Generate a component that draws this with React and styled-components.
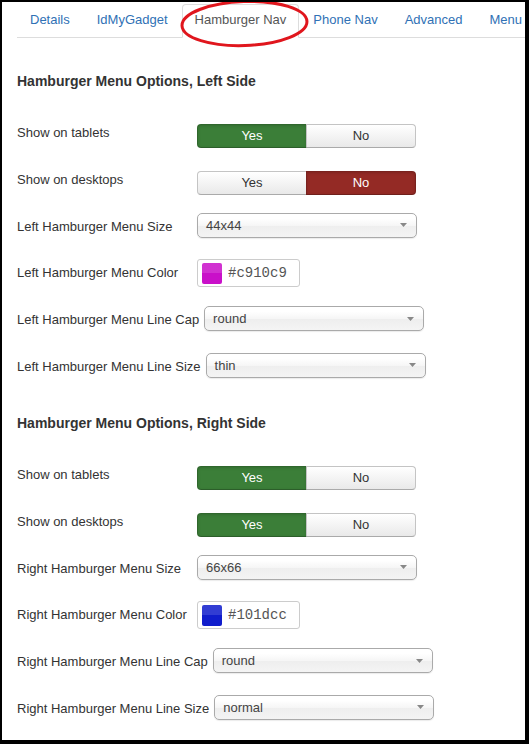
import React from "react";
import styled, { createGlobalStyle } from "styled-components";

const Global = createGlobalStyle`
  html, body { margin: 0; padding: 0; background: #fff; }
  body {
    font-family: "Liberation Sans", Arial, sans-serif;
    font-size: 13px;
    color: #333;
  }
`;

const Frame = styled.div`
  box-sizing: border-box;
  width: 529px;
  height: 744px;
  border-style: solid;
  border-color: #000;
  border-width: 2px 4px 4px 2px;
  background: #fff;
  overflow: hidden;
`;

const TabBar = styled.ul`
  display: flex;
  list-style: none;
  margin: 0 0 0 15px;
  padding: 2px 0 0;
  border-bottom: 1px solid #ddd;
  white-space: nowrap;
`;

const Tab = styled.li`
  position: relative;
  flex: none;
  margin: 0 1px -1px 0;
  padding: 6px 12px 8px;
  line-height: 18px;
  font-size: 13px;
  border: 1px solid ${(p) => (p.$active ? "#ddd" : "transparent")};
  border-bottom-color: ${(p) => (p.$active ? "#fff" : "transparent")};
  border-radius: 4px 4px 0 0;
  background: ${(p) => (p.$active ? "#fff" : "transparent")};
  color: ${(p) => (p.$active ? "#555" : "#3071b5")};
`;

const Circle = styled.svg`
  position: absolute;
  z-index: 2;
  left: -4px;
  top: -5px;
  transform: rotate(-2deg);
  pointer-events: none;
  overflow: visible;
`;

const Content = styled.div`
  padding: 33px 15px 0;
`;

const Section = styled.section`
  display: flex;
  flex-direction: column;
  & + & { margin-top: 13.2px; }
`;

const SectionTitle = styled.h3`
  margin: 0 0 28px;
  font-size: 14px;
  font-weight: bold;
  line-height: 20px;
  color: #333;
`;

const Row = styled.div`
  display: flex;
  align-items: flex-start;
  height: 28px;
  margin-bottom: 18.8px;
`;

const Label = styled.label`
  box-sizing: border-box;
  flex: none;
  min-width: 180px;
  padding: 5px 5px 0 0;
  line-height: 18px;
  white-space: nowrap;
  color: #333;
`;

const ToggleGroup = styled.div`
  display: flex;
  margin-top: 5px;
`;

const toggleBg = {
  success: "#3b7e38",
  danger: "#942a25",
};

const ToggleButton = styled.div`
  box-sizing: border-box;
  width: 110px;
  height: 24px;
  line-height: 22px;
  text-align: center;
  font-size: 13px;
  border: 1px solid ${(p) => (p.$variant ? "rgba(0,0,0,0.18)" : "#c4c4c4")};
  border-bottom-color: ${(p) => (p.$variant ? "rgba(0,0,0,0.25)" : "#aaa")};
  color: ${(p) => (p.$variant ? "#fff" : "#333")};
  background: ${(p) =>
    p.$variant ? toggleBg[p.$variant] : "linear-gradient(#ffffff, #e9e9e9)"};
  box-shadow: ${(p) =>
    p.$variant ? "inset 0 1px 3px rgba(0,0,0,0.15)" : "inset 0 1px 0 rgba(255,255,255,0.3)"};
  &:first-child { border-radius: 4px 0 0 4px; }
  &:last-child { border-radius: 0 4px 4px 0; margin-left: -1px; }
`;

const SelectBox = styled.div`
  box-sizing: border-box;
  display: flex;
  align-items: center;
  width: 220px;
  height: 25px;
  padding: 0 9px 0 8px;
  border: 1px solid #aaa;
  border-radius: 5px;
  background: linear-gradient(#fff 20%, #f6f6f6 50%, #eee 52%, #f4f4f4 100%);
  box-shadow: 0 1px 1px rgba(0, 0, 0, 0.08);
  color: #444;
  font-size: 13px;
  line-height: 23px;
`;

const SelectValue = styled.span`
  flex: 1;
`;

const Caret = styled.svg`
  flex: none;
`;

const ColorField = styled.div`
  box-sizing: border-box;
  display: flex;
  align-items: center;
  width: 103px;
  height: 28px;
  padding: 0 0 0 4px;
  border: 1px solid #ccc;
  border-radius: 3px;
  background: #fff;
`;

const Swatch = styled.span`
  flex: none;
  width: 20px;
  height: 21px;
  border-radius: 2px;
  background: linear-gradient(rgba(255, 255, 255, 0.14) 50%, rgba(0, 0, 0, 0) 50%),
    ${(p) => p.$color};
`;

const ColorText = styled.span`
  margin-left: 6px;
  font-family: "Liberation Mono", "Courier New", monospace;
  font-size: 14px;
  color: #555;
`;

const Toggle = ({ value }) => (
  <ToggleGroup>
    <ToggleButton $variant={value ? "success" : undefined}>Yes</ToggleButton>
    <ToggleButton $variant={value ? undefined : "danger"}>No</ToggleButton>
  </ToggleGroup>
);

const Select = ({ value }) => (
  <SelectBox>
    <SelectValue>{value}</SelectValue>
    <Caret width="7" height="4" viewBox="0 0 7 4">
      <polygon points="0,0 7,0 3.5,4" fill="#888" />
    </Caret>
  </SelectBox>
);

const Color = ({ value }) => (
  <ColorField>
    <Swatch $color={value} />
    <ColorText>{value}</ColorText>
  </ColorField>
);

const sections = [
  {
    title: "Hamburger Menu Options, Left Side",
    side: "Left",
    tablets: true,
    desktops: false,
    size: "44x44",
    color: "#c910c9",
    cap: "round",
    line: "thin",
  },
  {
    title: "Hamburger Menu Options, Right Side",
    side: "Right",
    tablets: true,
    desktops: true,
    size: "66x66",
    color: "#101dcc",
    cap: "round",
    line: "normal",
  },
];

const tabs = ["Details", "IdMyGadget", "Hamburger Nav", "Phone Nav", "Advanced", "Menu"];

export default function App() {
  return (
    <>
      <Global />
      <Frame>
        <TabBar>
          {tabs.map((t) => (
            <Tab key={t} $active={t === "Hamburger Nav"}>
              {t}
              {t === "Hamburger Nav" && (
                <Circle width="132" height="48" viewBox="0 0 132 48">
                  <ellipse
                    cx="65.5"
                    cy="23.5"
                    rx="62.5"
                    ry="22"
                    fill="none"
                    stroke="#e0161d"
                    strokeWidth="3"
                  />
                </Circle>
              )}
            </Tab>
          ))}
        </TabBar>
        <Content>
          {sections.map((s) => (
            <Section key={s.side}>
              <SectionTitle>{s.title}</SectionTitle>
              <Row>
                <Label>Show on tablets</Label>
                <Toggle value={s.tablets} />
              </Row>
              <Row>
                <Label>Show on desktops</Label>
                <Toggle value={s.desktops} />
              </Row>
              <Row>
                <Label>{s.side} Hamburger Menu Size</Label>
                <Select value={s.size} />
              </Row>
              <Row>
                <Label>{s.side} Hamburger Menu Color</Label>
                <Color value={s.color} />
              </Row>
              <Row>
                <Label>{s.side} Hamburger Menu Line Cap</Label>
                <Select value={s.cap} />
              </Row>
              <Row>
                <Label>{s.side} Hamburger Menu Line Size</Label>
                <Select value={s.line} />
              </Row>
            </Section>
          ))}
        </Content>
      </Frame>
    </>
  );
}
